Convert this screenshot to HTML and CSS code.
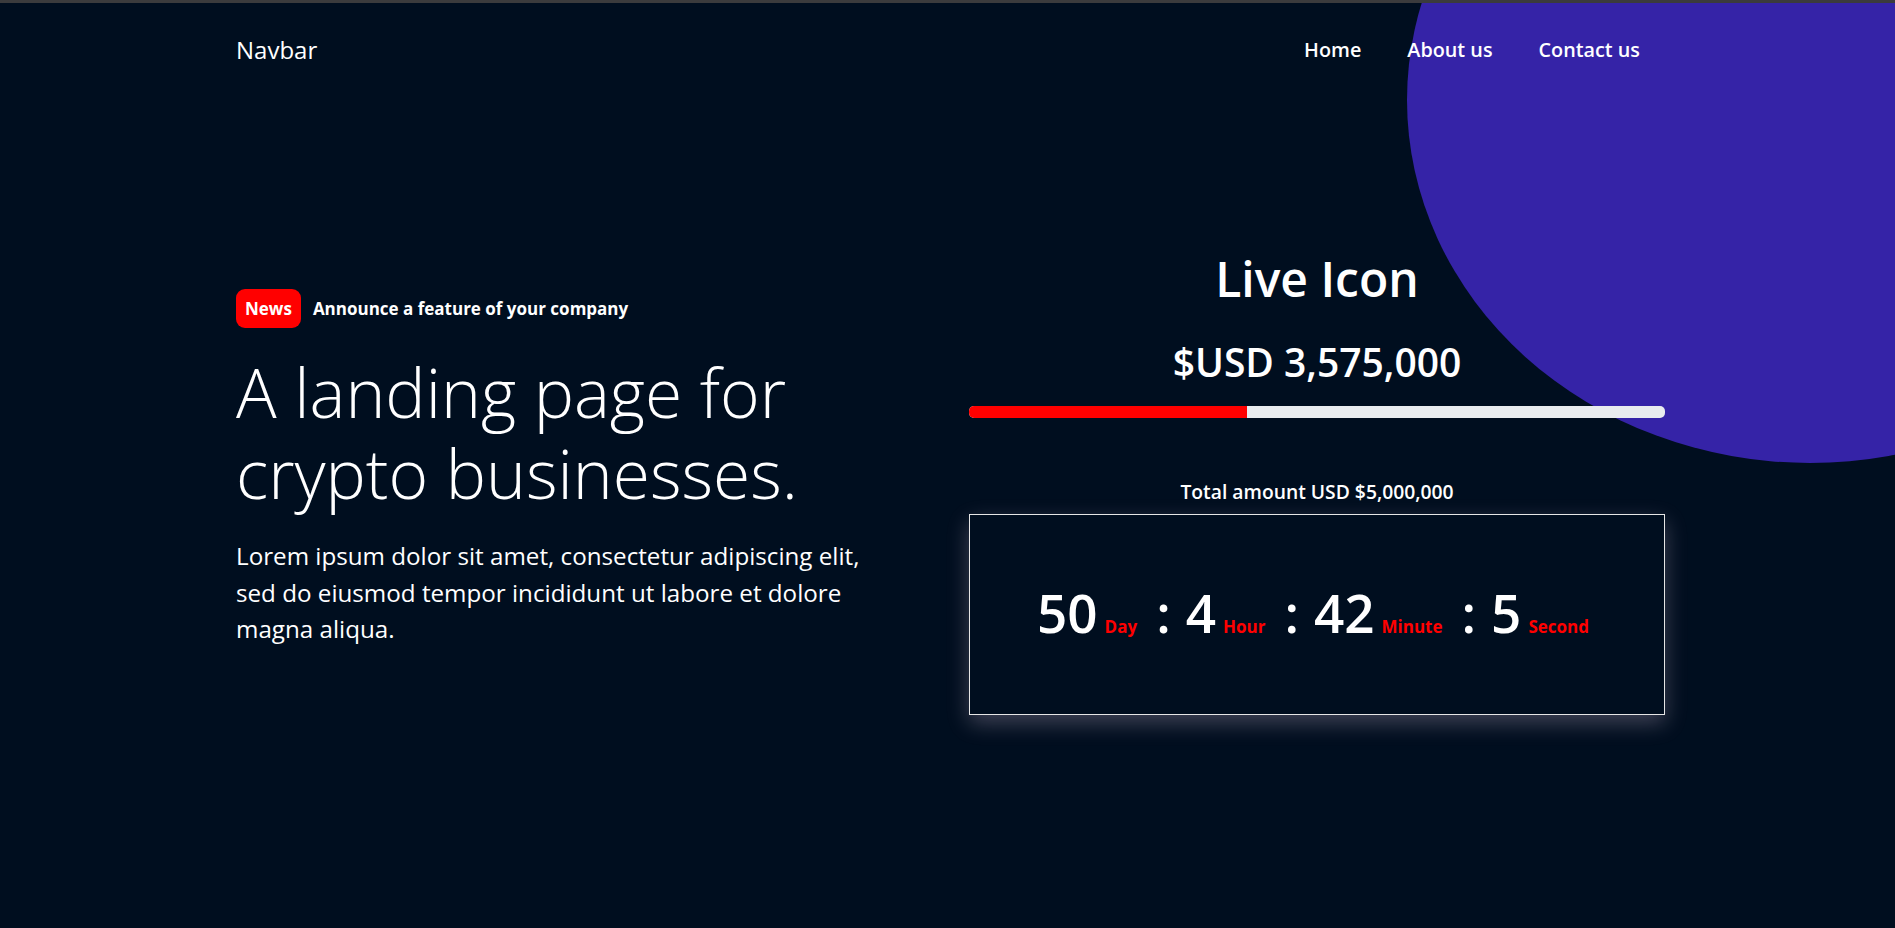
FILE: index.html
```html
<!DOCTYPE html>
<html lang="en">
<head>
<meta charset="utf-8">
<title>Crypto landing</title>
<link rel="stylesheet" href="styles.css">
</head>
<body>
<div class="page">
  <div class="topbar"></div>
  <div class="blob"></div>
  <header class="nav">
    <a class="brand" href="#">Navbar</a>
    <nav class="links">
      <a href="#">Home</a>
      <a href="#">About us</a>
      <a href="#">Contact us</a>
    </nav>
  </header>
  <main class="hero">
    <section class="left">
      <div class="news">
        <span class="badge">News</span>
        <span class="announce">Announce a feature of your company</span>
      </div>
      <h1 class="title">A landing page for crypto businesses.</h1>
      <p class="lead">Lorem ipsum dolor sit amet, consectetur adipiscing elit, sed do eiusmod tempor incididunt ut labore et dolore magna aliqua.</p>
    </section>
    <section class="right">
      <h2 class="live">Live Icon</h2>
      <div class="amount">$USD 3,575,000</div>
      <div class="progress"><div class="progress-fill" style="width:40%"></div></div>
      <div class="total">Total amount USD $5,000,000</div>
      <div class="countdown">
        <div class="unit"><span class="num">50</span><span class="label">Day</span></div>
        <span class="colon">:</span>
        <div class="unit"><span class="num">4</span><span class="label">Hour</span></div>
        <span class="colon">:</span>
        <div class="unit"><span class="num">42</span><span class="label">Minute</span></div>
        <span class="colon">:</span>
        <div class="unit"><span class="num">5</span><span class="label">Second</span></div>
      </div>
    </section>
  </main>
</div>
</body>
</html>
```
FILE: styles.css
```css
html, body {
  margin: 0;
  padding: 0;
}
body {
  background: #000e1f;
  color: #ffffff;
  font-family: "Open Sans", "Noto Sans", "Liberation Sans", sans-serif;
}
.page {
  position: relative;
  width: 1895px;
  height: 928px;
  overflow: hidden;
  background: #000e1f;
}
.topbar {
  position: relative;
  z-index: 2;
  height: 3px;
  background: #3b3b3d;
}
.blob {
  position: absolute;
  left: 1407px;
  top: -263px;
  width: 806px;
  height: 726px;
  border-radius: 50%;
  background: #3523a7;
  z-index: 0;
}
.nav {
  position: relative;
  z-index: 1;
  display: flex;
  justify-content: space-between;
  align-items: center;
  margin: 0 230px 0 236px;
  padding-top: 29px;
}
.brand {
  color: #ffffff;
  text-decoration: none;
  font-size: 24px;
  line-height: 36px;
  font-weight: 400;
}
.links {
  display: flex;
  gap: 46px;
  margin-right: 25px;
}
.links a {
  color: #ffffff;
  text-decoration: none;
  font-size: 19.8px;
  line-height: 30px;
  font-weight: 600;
}
.hero {
  position: relative;
  z-index: 1;
  display: flex;
  justify-content: space-between;
  align-items: flex-start;
  margin: 0 230px 0 236px;
}
.left {
  width: 660px;
  padding-top: 221px;
}
.news {
  display: flex;
  align-items: center;
  gap: 12px;
}
.badge {
  display: inline-flex;
  align-items: center;
  height: 39px;
  padding: 0 9px;
  background: #ff0000;
  border-radius: 9px;
  font-size: 17px;
  font-weight: 700;
}
.announce {
  font-size: 17px;
  font-weight: 700;
}
.title {
  margin: 24px 0 0;
  font-size: 67.7px;
  line-height: 81.2px;
  font-weight: 300;
}
.lead {
  margin: 24px 0 0;
  font-size: 24.2px;
  line-height: 36.3px;
  font-weight: 400;
}
.right {
  width: 696px;
  padding-top: 182px;
  display: flex;
  flex-direction: column;
  align-items: stretch;
  text-align: center;
}
.live {
  margin: 0;
  font-size: 48px;
  line-height: 57.6px;
  font-weight: 600;
}
.amount {
  margin-top: 31px;
  font-size: 39px;
  line-height: 46.8px;
  font-weight: 600;
}
.progress {
  margin-top: 21px;
  height: 12px;
  border-radius: 5px;
  background: #e9ecef;
  overflow: hidden;
  display: flex;
}
.progress-fill {
  background: #ff0000;
  height: 100%;
}
.total {
  margin-top: 59px;
  font-size: 19.3px;
  line-height: 29px;
  font-weight: 600;
}
.countdown {
  margin-top: 8px;
  border: 1px solid #e6e6e6;
  box-shadow: 0 8px 20px rgba(225, 200, 225, 0.28);
  display: flex;
  justify-content: center;
  align-items: baseline;
  padding: 66px 8px 0 0;
  box-sizing: border-box;
  height: 201px;
}
.unit {
  display: flex;
  align-items: baseline;
  gap: 7px;
}
.num {
  font-size: 53px;
  line-height: 63.6px;
  font-weight: 600;
}
.label {
  color: #ff0000;
  font-size: 17px;
  font-weight: 700;
}
.colon {
  font-size: 53px;
  line-height: 63.6px;
  font-weight: 600;
  margin: 0 15px 0 19px;
}
```
